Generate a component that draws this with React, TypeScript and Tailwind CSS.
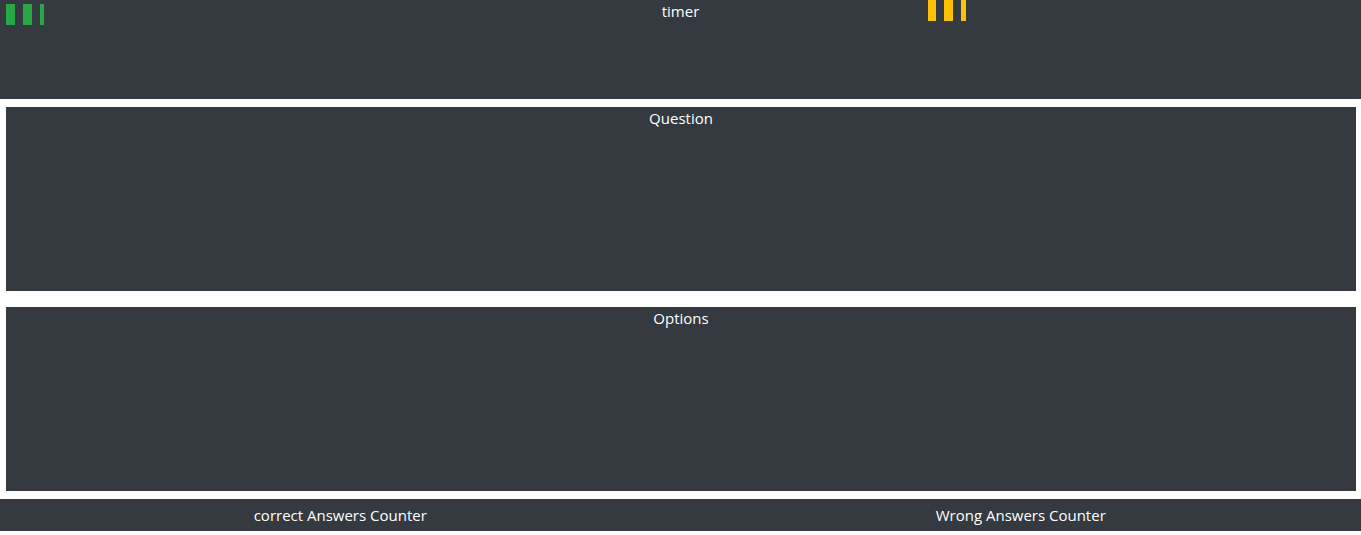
export default function App() {
  return (
    <div className="w-[1361px] h-[535px] bg-white text-[15px] leading-[22px] text-white" style={{ fontFamily: '"Open Sans", "Noto Sans", sans-serif' }}>
      {/* Header */}
      <header className="relative h-[99px] bg-[#343a40] text-center">
        <div>timer</div>
        <div className="absolute left-[6px] top-[4px] flex gap-[8px]">
          <span className="w-[9px] h-[21px] bg-[#28a745]" />
          <span className="w-[9px] h-[21px] bg-[#28a745]" />
          <span className="w-[4px] h-[21px] bg-[#28a745]" />
        </div>
        <div className="absolute left-[928px] top-0 flex gap-[8px]">
          <span className="w-[8px] h-[21px] bg-[#ffc107]" />
          <span className="w-[9px] h-[21px] bg-[#ffc107]" />
          <span className="w-[5px] h-[21px] bg-[#ffc107]" />
        </div>
      </header>

      {/* Question */}
      <section className="mt-[8px] ml-[6px] mr-[5px] h-[184px] bg-[#343a40] text-center">Question</section>

      {/* Options */}
      <section className="mt-[16px] ml-[6px] mr-[5px] h-[184px] bg-[#343a40] text-center">Options</section>

      {/* Counters */}
      <footer className="mt-[8px] h-[32px] bg-[#343a40] grid grid-cols-2 items-center text-center">
        <div>correct Answers Counter</div>
        <div>Wrong Answers Counter</div>
      </footer>
    </div>
  )
}
